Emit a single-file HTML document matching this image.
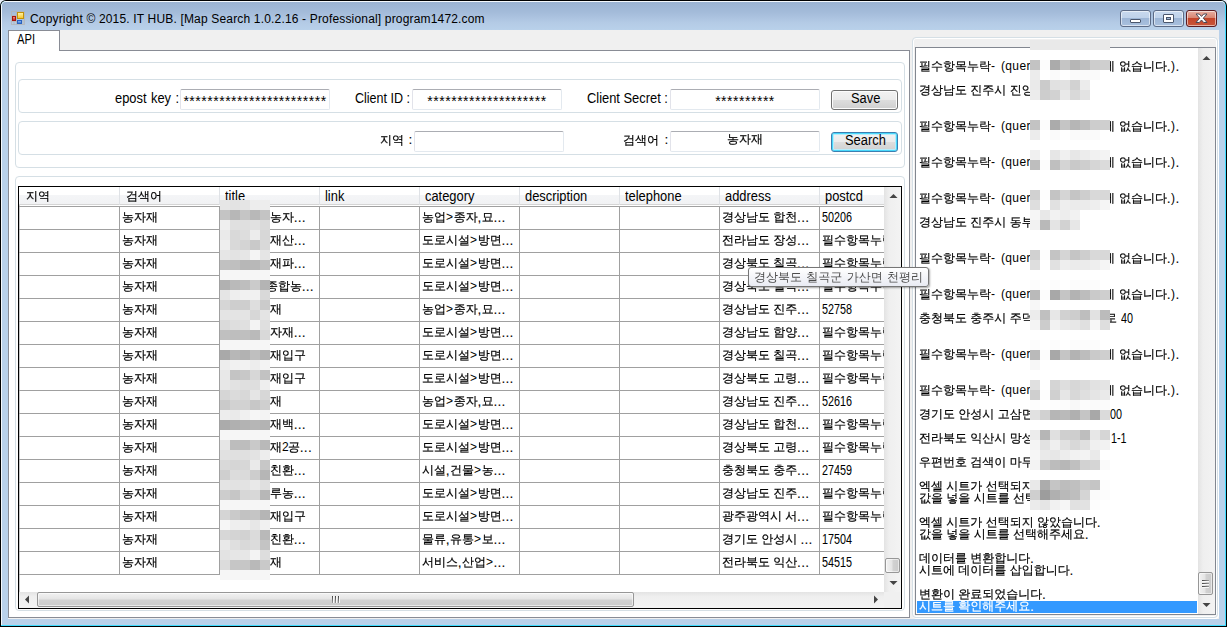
<!DOCTYPE html><html lang="ko"><head><meta charset="utf-8"><title>Map Search</title><style>
*{box-sizing:border-box;margin:0;padding:0}
html,body{width:1227px;height:627px;overflow:hidden;background:#b9d1ea}
body{position:relative;font-family:'Liberation Sans','WenQuanYi Zen Hei',sans-serif;font-size:12px;line-height:12px;color:#000;-webkit-text-stroke:.2px #000}
#win,#win *{position:absolute}
#win{left:0;top:0;width:1227px;height:627px;background:#b9d1ea;overflow:hidden}
#title{left:2px;top:2px;width:1223px;height:28px;background:linear-gradient(#9bb3d2 0,#a3bbd9 35%,#b4cbe6 75%,#b9d1ea 100%);border-radius:4px 4px 0 0}
#ttext{left:30px;top:11px;font-size:12px;line-height:16px;letter-spacing:.17px;-webkit-text-stroke:0;white-space:nowrap;color:#000;font-family:'Liberation Sans','DejaVu Sans',sans-serif}
#client{left:8px;top:30px;width:1211px;height:589px;background:#f0f0f0}
.gb{border:1px solid #d5dfe5;border-radius:4px;box-shadow:inset 0 0 0 1px #fff,1px 1px 0 #fff}
.tb{background:#fff;border:1px solid #e3e9ef;border-top-color:#abadb3;border-left-color:#e2e3ea;border-radius:2px;height:21px;text-align:center;line-height:19px;white-space:nowrap;overflow:hidden}
.lbl{white-space:nowrap;line-height:12px;word-spacing:1.5px}
.btn{border:1px solid #707070;border-radius:3px;box-shadow:inset 0 0 0 1px #fcfcfc;background:linear-gradient(#f2f2f2 0,#ebebeb 48%,#dddddd 52%,#cfcfcf 100%);text-align:center;line-height:18px}
.cell{white-space:nowrap;overflow:hidden;line-height:12px;height:13px}
.hd{white-space:nowrap;line-height:12px}
.ln{white-space:nowrap;line-height:12px;height:12px;left:919px}
.m{width:10px;height:10px}
.L{-webkit-text-stroke:0;font-size:14px;line-height:14px;white-space:nowrap;word-spacing:1px;transform:scaleX(.92);transform-origin:0 0}
.D{-webkit-text-stroke:0;font-size:14px;line-height:14px;white-space:nowrap;transform:scaleX(.771);transform-origin:0 0}
.dg{position:static !important;letter-spacing:-.6px;-webkit-text-stroke:0}
.q{position:relative !important;top:1px;letter-spacing:.7px}
.p{position:static !important;letter-spacing:.7px;-webkit-text-stroke:0}
.st{position:static !important;display:inline-block;font-size:14px;line-height:19px;letter-spacing:.52px;-webkit-text-stroke:0;transform:translateY(1.5px)}
</style></head><body><div id="win">
<div style="left:0;top:0;width:1227px;height:627px;background:#e8f0fa"></div>
<div style="left:0;top:0;width:1227px;height:627px;background:#000;border-radius:6px 6px 0 0"></div>
<div style="left:1px;top:1px;width:1225px;height:625px;background:#3fdcff;border-radius:5px 5px 0 0"></div>
<div style="left:1px;top:1px;width:1224px;height:624px;background:#f4f8fc;border-radius:5px 4px 0 0"></div>
<div style="left:2px;top:2px;width:1223px;height:623px;background:#b9d1ea;border-radius:4px 4px 0 0"></div>
<div id="title"></div>
<div id="ttext">Copyright © 2015. IT HUB. [Map Search 1.0.2.16 - Professional] program1472.com</div>
<svg style="left:11px;top:11px" width="14" height="14" viewBox="0 0 14 14"><g fill="none" stroke="#b4b4b4" stroke-opacity=".75"><rect x=".5" y=".5" width="13" height="13"/><path d="M5.5 .5V13.5M.5 4.5H5.5M.5 10.5H5.5M3 10.5V13.5M12 8.5V13.5"/></g><defs><linearGradient id="gy" x1="0" y1="0" x2="0" y2="1"><stop offset="0" stop-color="#fff6b0"/><stop offset="1" stop-color="#f7c322"/></linearGradient><linearGradient id="gr" x1="0" y1="0" x2="0" y2="1"><stop offset="0" stop-color="#f4a090"/><stop offset="1" stop-color="#c01810"/></linearGradient><linearGradient id="gbl" x1="0" y1="0" x2="0" y2="1"><stop offset="0" stop-color="#9cc4f8"/><stop offset="1" stop-color="#2f6fd0"/></linearGradient></defs><rect x="6.5" y="1.5" width="6" height="6" fill="url(#gy)" stroke="#c39208"/><rect x="1.5" y="5.5" width="3" height="4" fill="url(#gr)" stroke="#a8140c"/><rect x="6.5" y="9.5" width="4" height="3" fill="url(#gbl)" stroke="#2a62c0"/></svg>
<div style="left:1120px;top:10px;width:31px;height:17px;border:1px solid #5c6b86;border-radius:3px;background:linear-gradient(#c8d9ee 0,#bfd2ea 45%,#9db6d6 50%,#a9c0de 100%);box-shadow:inset 0 0 0 1px rgba(255,255,255,.55)"></div>
<div style="left:1153px;top:10px;width:31px;height:17px;border:1px solid #5c6b86;border-radius:3px;background:linear-gradient(#c8d9ee 0,#bfd2ea 45%,#9db6d6 50%,#a9c0de 100%);box-shadow:inset 0 0 0 1px rgba(255,255,255,.55)"></div>
<div style="left:1186px;top:10px;width:31px;height:17px;border:1px solid #5b1c22;border-radius:3px;background:linear-gradient(#e8b0a3 0,#d98673 45%,#c4452b 50%,#c8563a 100%);box-shadow:inset 0 0 0 1px rgba(255,255,255,.55)"></div>
<div style="left:1130px;top:19px;width:11px;height:4px;background:#fff;border:1px solid #4a566c;border-radius:1px"></div>
<div style="left:1163px;top:14px;width:11px;height:9px;background:#fff;border:1px solid #4a566c;border-radius:1px"></div>
<div style="left:1166px;top:17px;width:5px;height:3px;background:#9fb7d6;border:1px solid #4a566c"></div>
<svg style="left:1195px;top:13px" width="13" height="11" viewBox="0 0 13 11"><path d="M1 1 H4.3 L6.5 3.4 L8.7 1 H12 L8.3 5.2 L12 9.5 H8.7 L6.5 7 L4.3 9.5 H1 L4.7 5.2 Z" fill="#fff" stroke="#4a4a58" stroke-width="1" stroke-linejoin="round"/></svg>
<div id="client"></div>
<div style="left:8px;top:50px;width:902px;height:568px;background:#fff;border:1px solid #898c95"></div>
<div style="left:8px;top:30px;width:52px;height:21px;background:#fff;border:1px solid #898c95;border-bottom:none"></div>
<div class="L" style="left:17px;top:32px;transform:scaleX(.8)">API</div>
<div class="gb" style="left:15px;top:62px;width:890px;height:106px"></div>
<div class="gb" style="left:18px;top:79px;width:884px;height:34px"></div>
<div class="gb" style="left:18px;top:121px;width:884px;height:34px"></div>
<div class="gb" style="left:15px;top:176px;width:890px;height:435px"></div>
<div class="L" style="left:115px;top:91px">epost key :</div>
<div class="tb" style="left:180px;top:89px;width:150px"><span class="st">************************</span></div>
<div class="L" style="left:355px;top:91px;word-spacing:0;transform:scaleX(.895)">Client ID :</div>
<div class="tb" style="left:412px;top:89px;width:150px"><span class="st">********************</span></div>
<div class="L" style="left:587px;top:91px;word-spacing:0">Client Secret :</div>
<div class="tb" style="left:670px;top:89px;width:150px"><span class="st">**********</span></div>
<div class="btn" style="left:831px;top:90px;width:67px;height:20px"></div>
<div class="L" style="left:851px;top:91px">Save</div>
<div class="lbl" style="left:380px;top:134px">지역 :</div>
<div class="tb" style="left:414px;top:131px;width:150px"></div>
<div class="lbl" style="left:623px;top:134px;word-spacing:2.5px">검색어 :</div>
<div class="tb" style="left:670px;top:131px;width:150px;line-height:15px">농자재</div>
<div class="btn" style="left:831px;top:132px;width:67px;height:20px;border-color:#3c7fb1;box-shadow:inset 0 0 0 1px #48d8fb,inset 0 0 0 2px #b8ecfb"></div>
<div class="L" style="left:845px;top:133px">Search</div>
<div style="left:18px;top:186px;width:884px;height:423px;background:#fff;border:1px solid #000;box-shadow:inset 1px 1px 0 rgba(0,0,0,.22)"></div>
<div style="left:19px;top:187px;width:865px;height:18px;background:linear-gradient(#fff 0,#fff 45%,#f4f5f7 50%,#f1f2f4 100%);border-bottom:1px solid #d5d5d5"></div>
<div class="hd" style="left:26px;top:190px">지역</div>
<div class="hd" style="left:126px;top:190px">검색어</div>
<div style="left:119px;top:187px;width:1px;height:18px;background:#dfe2e6"></div>
<div class="L" style="left:225px;top:189px">title</div>
<div style="left:219px;top:187px;width:1px;height:18px;background:#dfe2e6"></div>
<div class="L" style="left:325px;top:189px">link</div>
<div style="left:319px;top:187px;width:1px;height:18px;background:#dfe2e6"></div>
<div class="L" style="left:425px;top:189px">category</div>
<div style="left:419px;top:187px;width:1px;height:18px;background:#dfe2e6"></div>
<div class="L" style="left:525px;top:189px">description</div>
<div style="left:519px;top:187px;width:1px;height:18px;background:#dfe2e6"></div>
<div class="L" style="left:625px;top:189px">telephone</div>
<div style="left:619px;top:187px;width:1px;height:18px;background:#dfe2e6"></div>
<div class="L" style="left:725px;top:189px">address</div>
<div style="left:719px;top:187px;width:1px;height:18px;background:#dfe2e6"></div>
<div class="L" style="left:825px;top:189px">postcd</div>
<div style="left:819px;top:187px;width:1px;height:18px;background:#dfe2e6"></div>
<div style="left:19px;top:206px;width:865px;height:1px;background:#a0a0a0"></div>
<div style="left:19px;top:229px;width:865px;height:1px;background:#a0a0a0"></div>
<div style="left:19px;top:252px;width:865px;height:1px;background:#a0a0a0"></div>
<div style="left:19px;top:275px;width:865px;height:1px;background:#a0a0a0"></div>
<div style="left:19px;top:298px;width:865px;height:1px;background:#a0a0a0"></div>
<div style="left:19px;top:321px;width:865px;height:1px;background:#a0a0a0"></div>
<div style="left:19px;top:344px;width:865px;height:1px;background:#a0a0a0"></div>
<div style="left:19px;top:367px;width:865px;height:1px;background:#a0a0a0"></div>
<div style="left:19px;top:390px;width:865px;height:1px;background:#a0a0a0"></div>
<div style="left:19px;top:413px;width:865px;height:1px;background:#a0a0a0"></div>
<div style="left:19px;top:436px;width:865px;height:1px;background:#a0a0a0"></div>
<div style="left:19px;top:459px;width:865px;height:1px;background:#a0a0a0"></div>
<div style="left:19px;top:482px;width:865px;height:1px;background:#a0a0a0"></div>
<div style="left:19px;top:505px;width:865px;height:1px;background:#a0a0a0"></div>
<div style="left:19px;top:528px;width:865px;height:1px;background:#a0a0a0"></div>
<div style="left:19px;top:551px;width:865px;height:1px;background:#a0a0a0"></div>
<div style="left:19px;top:574px;width:865px;height:1px;background:#a0a0a0"></div>
<div style="left:119px;top:206px;width:1px;height:369px;background:#a0a0a0"></div>
<div style="left:219px;top:206px;width:1px;height:369px;background:#a0a0a0"></div>
<div style="left:319px;top:206px;width:1px;height:369px;background:#a0a0a0"></div>
<div style="left:419px;top:206px;width:1px;height:369px;background:#a0a0a0"></div>
<div style="left:519px;top:206px;width:1px;height:369px;background:#a0a0a0"></div>
<div style="left:619px;top:206px;width:1px;height:369px;background:#a0a0a0"></div>
<div style="left:719px;top:206px;width:1px;height:369px;background:#a0a0a0"></div>
<div style="left:819px;top:206px;width:1px;height:369px;background:#a0a0a0"></div>
<div class="cell" style="left:122px;top:211px">농자재</div>
<div class="cell" style="left:270px;top:211px">농자<span class="q">...</span></div>
<div class="cell" style="left:422px;top:211px">농업<span class="p">&gt;</span>종자<span class="q">,</span>묘<span class="q">...</span></div>
<div class="cell" style="left:722px;top:211px">경상남도 합천<span class="q">...</span></div>
<div class="D" style="left:822px;top:210px">50206</div>
<div class="cell" style="left:122px;top:234px">농자재</div>
<div class="cell" style="left:270px;top:234px">재산<span class="q">...</span></div>
<div class="cell" style="left:422px;top:234px">도로시설<span class="p">&gt;</span>방면<span class="q">...</span></div>
<div class="cell" style="left:722px;top:234px">전라남도 장성<span class="q">...</span></div>
<div class="cell" style="left:822px;top:234px;width:63px">필수항목누락</div>
<div class="cell" style="left:122px;top:257px">농자재</div>
<div class="cell" style="left:270px;top:257px">재파<span class="q">...</span></div>
<div class="cell" style="left:422px;top:257px">도로시설<span class="p">&gt;</span>방면<span class="q">...</span></div>
<div class="cell" style="left:722px;top:257px">경상북도 칠곡<span class="q">...</span></div>
<div class="cell" style="left:822px;top:257px;width:63px">필수항목누락</div>
<div class="cell" style="left:122px;top:280px">농자재</div>
<div class="cell" style="left:266px;top:280px">종합농<span class="q">...</span></div>
<div class="cell" style="left:422px;top:280px">도로시설<span class="p">&gt;</span>방면<span class="q">...</span></div>
<div class="cell" style="left:722px;top:280px">경상북도 칠곡<span class="q">...</span></div>
<div class="cell" style="left:822px;top:280px;width:63px">필수항목누락</div>
<div class="cell" style="left:122px;top:303px">농자재</div>
<div class="cell" style="left:270px;top:303px">재</div>
<div class="cell" style="left:422px;top:303px">농업<span class="p">&gt;</span>종자<span class="q">,</span>묘<span class="q">...</span></div>
<div class="cell" style="left:722px;top:303px">경상남도 진주<span class="q">...</span></div>
<div class="D" style="left:822px;top:302px">52758</div>
<div class="cell" style="left:122px;top:326px">농자재</div>
<div class="cell" style="left:270px;top:326px">자재<span class="q">...</span></div>
<div class="cell" style="left:422px;top:326px">도로시설<span class="p">&gt;</span>방면<span class="q">...</span></div>
<div class="cell" style="left:722px;top:326px">경상남도 함양<span class="q">...</span></div>
<div class="cell" style="left:822px;top:326px;width:63px">필수항목누락</div>
<div class="cell" style="left:122px;top:349px">농자재</div>
<div class="cell" style="left:270px;top:349px">재입구</div>
<div class="cell" style="left:422px;top:349px">도로시설<span class="p">&gt;</span>방면<span class="q">...</span></div>
<div class="cell" style="left:722px;top:349px">경상북도 칠곡<span class="q">...</span></div>
<div class="cell" style="left:822px;top:349px;width:63px">필수항목누락</div>
<div class="cell" style="left:122px;top:372px">농자재</div>
<div class="cell" style="left:270px;top:372px">재입구</div>
<div class="cell" style="left:422px;top:372px">도로시설<span class="p">&gt;</span>방면<span class="q">...</span></div>
<div class="cell" style="left:722px;top:372px">경상북도 고령<span class="q">...</span></div>
<div class="cell" style="left:822px;top:372px;width:63px">필수항목누락</div>
<div class="cell" style="left:122px;top:395px">농자재</div>
<div class="cell" style="left:270px;top:395px">재</div>
<div class="cell" style="left:422px;top:395px">농업<span class="p">&gt;</span>종자<span class="q">,</span>묘<span class="q">...</span></div>
<div class="cell" style="left:722px;top:395px">경상남도 진주<span class="q">...</span></div>
<div class="D" style="left:822px;top:394px">52616</div>
<div class="cell" style="left:122px;top:418px">농자재</div>
<div class="cell" style="left:270px;top:418px">재백<span class="q">...</span></div>
<div class="cell" style="left:422px;top:418px">도로시설<span class="p">&gt;</span>방면<span class="q">...</span></div>
<div class="cell" style="left:722px;top:418px">경상남도 합천<span class="q">...</span></div>
<div class="cell" style="left:822px;top:418px;width:63px">필수항목누락</div>
<div class="cell" style="left:122px;top:441px">농자재</div>
<div class="cell" style="left:270px;top:441px">재<span class="dg">2</span>공<span class="q">...</span></div>
<div class="cell" style="left:422px;top:441px">도로시설<span class="p">&gt;</span>방면<span class="q">...</span></div>
<div class="cell" style="left:722px;top:441px">경상북도 고령<span class="q">...</span></div>
<div class="cell" style="left:822px;top:441px;width:63px">필수항목누락</div>
<div class="cell" style="left:122px;top:464px">농자재</div>
<div class="cell" style="left:270px;top:464px">친환<span class="q">...</span></div>
<div class="cell" style="left:422px;top:464px">시설<span class="q">,</span>건물<span class="p">&gt;</span>농<span class="q">...</span></div>
<div class="cell" style="left:722px;top:464px">충청북도 충주<span class="q">...</span></div>
<div class="D" style="left:822px;top:463px">27459</div>
<div class="cell" style="left:122px;top:487px">농자재</div>
<div class="cell" style="left:270px;top:487px">루농<span class="q">...</span></div>
<div class="cell" style="left:422px;top:487px">도로시설<span class="p">&gt;</span>방면<span class="q">...</span></div>
<div class="cell" style="left:722px;top:487px">경상남도 진주<span class="q">...</span></div>
<div class="cell" style="left:822px;top:487px;width:63px">필수항목누락</div>
<div class="cell" style="left:122px;top:510px">농자재</div>
<div class="cell" style="left:270px;top:510px">재입구</div>
<div class="cell" style="left:422px;top:510px">도로시설<span class="p">&gt;</span>방면<span class="q">...</span></div>
<div class="cell" style="left:722px;top:510px">광주광역시 서<span class="q">...</span></div>
<div class="cell" style="left:822px;top:510px;width:63px">필수항목누락</div>
<div class="cell" style="left:122px;top:533px">농자재</div>
<div class="cell" style="left:270px;top:533px">친환<span class="q">...</span></div>
<div class="cell" style="left:422px;top:533px">물류<span class="q">,</span>유통<span class="p">&gt;</span>보<span class="q">...</span></div>
<div class="cell" style="left:722px;top:533px">경기도 안성시 <span class="q">...</span></div>
<div class="D" style="left:822px;top:532px">17504</div>
<div class="cell" style="left:122px;top:556px">농자재</div>
<div class="cell" style="left:270px;top:556px">재</div>
<div class="cell" style="left:422px;top:556px">서비스<span class="q">,</span>산업<span class="p">&gt;</span><span class="q">...</span></div>
<div class="cell" style="left:722px;top:556px">전라북도 익산<span class="q">...</span></div>
<div class="D" style="left:822px;top:555px">54515</div>
<div class="m" style="left:220px;top:200px;background:#e6e6e6"></div>
<div class="m" style="left:230px;top:200px;background:#e3e3e3"></div>
<div class="m" style="left:240px;top:200px;background:#e5e5e5"></div>
<div class="m" style="left:250px;top:200px;background:#ededed"></div>
<div class="m" style="left:260px;top:200px;background:#ededed"></div>
<div class="m" style="left:220px;top:210px;background:#c4c4c4"></div>
<div class="m" style="left:230px;top:210px;background:#b7b7b7"></div>
<div class="m" style="left:240px;top:210px;background:#c5c5c5"></div>
<div class="m" style="left:250px;top:210px;background:#b8b8b8"></div>
<div class="m" style="left:260px;top:210px;background:#c4c4c4"></div>
<div class="m" style="left:220px;top:220px;background:#efefef"></div>
<div class="m" style="left:230px;top:220px;background:#e0e0e0"></div>
<div class="m" style="left:240px;top:220px;background:#dfdfdf"></div>
<div class="m" style="left:250px;top:220px;background:#e1e1e1"></div>
<div class="m" style="left:260px;top:220px;background:#dadada"></div>
<div class="m" style="left:220px;top:230px;background:#eaeaea"></div>
<div class="m" style="left:230px;top:230px;background:#d9d9d9"></div>
<div class="m" style="left:240px;top:230px;background:#dddddd"></div>
<div class="m" style="left:250px;top:230px;background:#ececec"></div>
<div class="m" style="left:260px;top:230px;background:#d7d7d7"></div>
<div class="m" style="left:220px;top:240px;background:#eeeeee"></div>
<div class="m" style="left:230px;top:240px;background:#d9d9d9"></div>
<div class="m" style="left:240px;top:240px;background:#d4d4d4"></div>
<div class="m" style="left:250px;top:240px;background:#c9c9c9"></div>
<div class="m" style="left:260px;top:240px;background:#d9d9d9"></div>
<div class="m" style="left:220px;top:250px;background:#e6e6e6"></div>
<div class="m" style="left:230px;top:250px;background:#e3e3e3"></div>
<div class="m" style="left:240px;top:250px;background:#e6e6e6"></div>
<div class="m" style="left:250px;top:250px;background:#f4f4f4"></div>
<div class="m" style="left:260px;top:250px;background:#e5e5e5"></div>
<div class="m" style="left:220px;top:260px;background:#c1c1c1"></div>
<div class="m" style="left:230px;top:260px;background:#bfbfbf"></div>
<div class="m" style="left:240px;top:260px;background:#b7b7b7"></div>
<div class="m" style="left:250px;top:260px;background:#b8b8b8"></div>
<div class="m" style="left:260px;top:260px;background:#c1c1c1"></div>
<div class="m" style="left:220px;top:270px;background:#f6f6f6"></div>
<div class="m" style="left:230px;top:270px;background:#f6f6f6"></div>
<div class="m" style="left:240px;top:270px;background:#f6f6f6"></div>
<div class="m" style="left:250px;top:270px;background:#f6f6f6"></div>
<div class="m" style="left:260px;top:270px;background:#f6f6f6"></div>
<div class="m" style="left:220px;top:280px;background:#b1b1b1"></div>
<div class="m" style="left:230px;top:280px;background:#bababa"></div>
<div class="m" style="left:240px;top:280px;background:#bebebe"></div>
<div class="m" style="left:250px;top:280px;background:#cbcbcb"></div>
<div class="m" style="left:260px;top:280px;background:#b4b4b4"></div>
<div class="m" style="left:220px;top:290px;background:#e5e5e5"></div>
<div class="m" style="left:230px;top:290px;background:#eeeeee"></div>
<div class="m" style="left:240px;top:290px;background:#f1f1f1"></div>
<div class="m" style="left:250px;top:290px;background:#f1f1f1"></div>
<div class="m" style="left:260px;top:290px;background:#d9d9d9"></div>
<div class="m" style="left:220px;top:300px;background:#d6d6d6"></div>
<div class="m" style="left:230px;top:300px;background:#cecece"></div>
<div class="m" style="left:240px;top:300px;background:#cecece"></div>
<div class="m" style="left:250px;top:300px;background:#dedede"></div>
<div class="m" style="left:260px;top:300px;background:#cbcbcb"></div>
<div class="m" style="left:220px;top:310px;background:#e4e4e4"></div>
<div class="m" style="left:230px;top:310px;background:#e4e4e4"></div>
<div class="m" style="left:240px;top:310px;background:#e4e4e4"></div>
<div class="m" style="left:250px;top:310px;background:#d7d7d7"></div>
<div class="m" style="left:260px;top:310px;background:#e4e4e4"></div>
<div class="m" style="left:220px;top:320px;background:#dadada"></div>
<div class="m" style="left:230px;top:320px;background:#dedede"></div>
<div class="m" style="left:240px;top:320px;background:#e0e0e0"></div>
<div class="m" style="left:250px;top:320px;background:#f3f3f3"></div>
<div class="m" style="left:260px;top:320px;background:#dfdfdf"></div>
<div class="m" style="left:220px;top:330px;background:#c0c0c0"></div>
<div class="m" style="left:230px;top:330px;background:#bebebe"></div>
<div class="m" style="left:240px;top:330px;background:#bfbfbf"></div>
<div class="m" style="left:250px;top:330px;background:#bababa"></div>
<div class="m" style="left:260px;top:330px;background:#d9d9d9"></div>
<div class="m" style="left:220px;top:340px;background:#f6f6f6"></div>
<div class="m" style="left:230px;top:340px;background:#f6f6f6"></div>
<div class="m" style="left:240px;top:340px;background:#f6f6f6"></div>
<div class="m" style="left:250px;top:340px;background:#f6f6f6"></div>
<div class="m" style="left:260px;top:340px;background:#f6f6f6"></div>
<div class="m" style="left:220px;top:350px;background:#a9a9a9"></div>
<div class="m" style="left:230px;top:350px;background:#b7b7b7"></div>
<div class="m" style="left:240px;top:350px;background:#b2b2b2"></div>
<div class="m" style="left:250px;top:350px;background:#bfbfbf"></div>
<div class="m" style="left:260px;top:350px;background:#b3b3b3"></div>
<div class="m" style="left:220px;top:360px;background:#ededed"></div>
<div class="m" style="left:230px;top:360px;background:#f1f1f1"></div>
<div class="m" style="left:240px;top:360px;background:#f2f2f2"></div>
<div class="m" style="left:250px;top:360px;background:#ededed"></div>
<div class="m" style="left:260px;top:360px;background:#f3f3f3"></div>
<div class="m" style="left:220px;top:370px;background:#e8e8e8"></div>
<div class="m" style="left:230px;top:370px;background:#c4c4c4"></div>
<div class="m" style="left:240px;top:370px;background:#c8c8c8"></div>
<div class="m" style="left:250px;top:370px;background:#d7d7d7"></div>
<div class="m" style="left:260px;top:370px;background:#c2c2c2"></div>
<div class="m" style="left:220px;top:380px;background:#e7e7e7"></div>
<div class="m" style="left:230px;top:380px;background:#e2e2e2"></div>
<div class="m" style="left:240px;top:380px;background:#dfdfdf"></div>
<div class="m" style="left:250px;top:380px;background:#dedede"></div>
<div class="m" style="left:260px;top:380px;background:#eeeeee"></div>
<div class="m" style="left:220px;top:390px;background:#d6d6d6"></div>
<div class="m" style="left:230px;top:390px;background:#dbdbdb"></div>
<div class="m" style="left:240px;top:390px;background:#d8d8d8"></div>
<div class="m" style="left:250px;top:390px;background:#e5e5e5"></div>
<div class="m" style="left:260px;top:390px;background:#d7d7d7"></div>
<div class="m" style="left:220px;top:400px;background:#cacaca"></div>
<div class="m" style="left:230px;top:400px;background:#d2d2d2"></div>
<div class="m" style="left:240px;top:400px;background:#d2d2d2"></div>
<div class="m" style="left:250px;top:400px;background:#c7c7c7"></div>
<div class="m" style="left:260px;top:400px;background:#cfcfcf"></div>
<div class="m" style="left:220px;top:410px;background:#ededed"></div>
<div class="m" style="left:230px;top:410px;background:#eaeaea"></div>
<div class="m" style="left:240px;top:410px;background:#f0f0f0"></div>
<div class="m" style="left:250px;top:410px;background:#f6f6f6"></div>
<div class="m" style="left:260px;top:410px;background:#f3f3f3"></div>
<div class="m" style="left:220px;top:420px;background:#ababab"></div>
<div class="m" style="left:230px;top:420px;background:#b0b0b0"></div>
<div class="m" style="left:240px;top:420px;background:#b3b3b3"></div>
<div class="m" style="left:250px;top:420px;background:#b6b6b6"></div>
<div class="m" style="left:260px;top:420px;background:#b3b3b3"></div>
<div class="m" style="left:220px;top:430px;background:#f6f6f6"></div>
<div class="m" style="left:230px;top:430px;background:#f6f6f6"></div>
<div class="m" style="left:240px;top:430px;background:#f6f6f6"></div>
<div class="m" style="left:250px;top:430px;background:#f6f6f6"></div>
<div class="m" style="left:260px;top:430px;background:#f6f6f6"></div>
<div class="m" style="left:220px;top:440px;background:#e6e6e6"></div>
<div class="m" style="left:230px;top:440px;background:#bdbdbd"></div>
<div class="m" style="left:240px;top:440px;background:#bdbdbd"></div>
<div class="m" style="left:250px;top:440px;background:#c9c9c9"></div>
<div class="m" style="left:260px;top:440px;background:#b9b9b9"></div>
<div class="m" style="left:220px;top:450px;background:#e1e1e1"></div>
<div class="m" style="left:230px;top:450px;background:#e0e0e0"></div>
<div class="m" style="left:240px;top:450px;background:#e0e0e0"></div>
<div class="m" style="left:250px;top:450px;background:#e3e3e3"></div>
<div class="m" style="left:260px;top:450px;background:#ededed"></div>
<div class="m" style="left:220px;top:460px;background:#d9d9d9"></div>
<div class="m" style="left:230px;top:460px;background:#d6d6d6"></div>
<div class="m" style="left:240px;top:460px;background:#d7d7d7"></div>
<div class="m" style="left:250px;top:460px;background:#eaeaea"></div>
<div class="m" style="left:260px;top:460px;background:#c7c7c7"></div>
<div class="m" style="left:220px;top:470px;background:#cfcfcf"></div>
<div class="m" style="left:230px;top:470px;background:#dcdcdc"></div>
<div class="m" style="left:240px;top:470px;background:#dadada"></div>
<div class="m" style="left:250px;top:470px;background:#cdcdcd"></div>
<div class="m" style="left:260px;top:470px;background:#b6b6b6"></div>
<div class="m" style="left:220px;top:480px;background:#e4e4e4"></div>
<div class="m" style="left:230px;top:480px;background:#e2e2e2"></div>
<div class="m" style="left:240px;top:480px;background:#e3e3e3"></div>
<div class="m" style="left:250px;top:480px;background:#e9e9e9"></div>
<div class="m" style="left:260px;top:480px;background:#dfdfdf"></div>
<div class="m" style="left:220px;top:490px;background:#cdcdcd"></div>
<div class="m" style="left:230px;top:490px;background:#c6c6c6"></div>
<div class="m" style="left:240px;top:490px;background:#d7d7d7"></div>
<div class="m" style="left:250px;top:490px;background:#d8d8d8"></div>
<div class="m" style="left:260px;top:490px;background:#b7b7b7"></div>
<div class="m" style="left:220px;top:500px;background:#f6f6f6"></div>
<div class="m" style="left:230px;top:500px;background:#f6f6f6"></div>
<div class="m" style="left:240px;top:500px;background:#f6f6f6"></div>
<div class="m" style="left:250px;top:500px;background:#f6f6f6"></div>
<div class="m" style="left:260px;top:500px;background:#f6f6f6"></div>
<div class="m" style="left:220px;top:510px;background:#d5d5d5"></div>
<div class="m" style="left:230px;top:510px;background:#cacaca"></div>
<div class="m" style="left:240px;top:510px;background:#c2c2c2"></div>
<div class="m" style="left:250px;top:510px;background:#c5c5c5"></div>
<div class="m" style="left:260px;top:510px;background:#b5b5b5"></div>
<div class="m" style="left:220px;top:520px;background:#f6f6f6"></div>
<div class="m" style="left:230px;top:520px;background:#eeeeee"></div>
<div class="m" style="left:240px;top:520px;background:#eeeeee"></div>
<div class="m" style="left:250px;top:520px;background:#e7e7e7"></div>
<div class="m" style="left:260px;top:520px;background:#f1f1f1"></div>
<div class="m" style="left:220px;top:530px;background:#d7d7d7"></div>
<div class="m" style="left:230px;top:530px;background:#d4d4d4"></div>
<div class="m" style="left:240px;top:530px;background:#d2d2d2"></div>
<div class="m" style="left:250px;top:530px;background:#dbdbdb"></div>
<div class="m" style="left:260px;top:530px;background:#b9b9b9"></div>
<div class="m" style="left:220px;top:540px;background:#e9e9e9"></div>
<div class="m" style="left:230px;top:540px;background:#dfdfdf"></div>
<div class="m" style="left:240px;top:540px;background:#d9d9d9"></div>
<div class="m" style="left:250px;top:540px;background:#dcdcdc"></div>
<div class="m" style="left:260px;top:540px;background:#c4c4c4"></div>
<div class="m" style="left:220px;top:550px;background:#e3e3e3"></div>
<div class="m" style="left:230px;top:550px;background:#e6e6e6"></div>
<div class="m" style="left:240px;top:550px;background:#e7e7e7"></div>
<div class="m" style="left:250px;top:550px;background:#f3f3f3"></div>
<div class="m" style="left:260px;top:550px;background:#dddddd"></div>
<div class="m" style="left:220px;top:560px;background:#dcdcdc"></div>
<div class="m" style="left:230px;top:560px;background:#c6c6c6"></div>
<div class="m" style="left:240px;top:560px;background:#c6c6c6"></div>
<div class="m" style="left:250px;top:560px;background:#b9b9b9"></div>
<div class="m" style="left:260px;top:560px;background:#c9c9c9"></div>
<div class="m" style="left:220px;top:570px;background:#f6f6f6"></div>
<div class="m" style="left:230px;top:570px;background:#f6f6f6"></div>
<div class="m" style="left:240px;top:570px;background:#f6f6f6"></div>
<div class="m" style="left:250px;top:570px;background:#f6f6f6"></div>
<div class="m" style="left:260px;top:570px;background:#f6f6f6"></div>
<div style="left:884px;top:187px;width:17px;height:405px;background:linear-gradient(90deg,#e3e3e3 0,#efefef 30%,#f3f3f3 100%)"></div>
<svg style="left:889px;top:193px" width="9" height="6" viewBox="0 0 9 6"><path d="M0.5 5 L4.5 1 L8.5 5 Z" fill="#444"/></svg>
<div style="left:885px;top:558px;width:15px;height:15px;border:1px solid #979797;border-radius:2px;background:linear-gradient(90deg,#f2f2f2 0,#e4e4e4 48%,#d2d2d2 52%,#cbcbcb 100%);box-shadow:inset 0 0 0 1px rgba(255,255,255,.55)"></div>
<svg style="left:889px;top:580px" width="9" height="6" viewBox="0 0 9 6"><path d="M0.5 1 L8.5 1 L4.5 5 Z" fill="#444"/></svg>
<div style="left:19px;top:592px;width:865px;height:16px;background:linear-gradient(#e3e3e3 0,#efefef 30%,#f3f3f3 100%)"></div>
<div style="left:884px;top:592px;width:17px;height:16px;background:#f0f0f0"></div>
<svg style="left:24px;top:595px" width="6" height="9" viewBox="0 0 6 9"><path d="M5 0.5 L1 4.5 L5 8.5 Z" fill="#444"/></svg>
<svg style="left:873px;top:595px" width="6" height="9" viewBox="0 0 6 9"><path d="M1 0.5 L5 4.5 L1 8.5 Z" fill="#444"/></svg>
<div style="left:37px;top:592px;width:597px;height:15px;border:1px solid #979797;border-radius:2px;background:linear-gradient(#f2f2f2 0,#e4e4e4 48%,#d2d2d2 52%,#cbcbcb 100%);box-shadow:inset 0 0 0 1px rgba(255,255,255,.55)"></div>
<div style="left:332px;top:596px;width:1px;height:7px;background:linear-gradient(#444,#999);box-shadow:1px 0 0 #f8f8f8"></div>
<div style="left:335px;top:596px;width:1px;height:7px;background:linear-gradient(#444,#999);box-shadow:1px 0 0 #f8f8f8"></div>
<div style="left:338px;top:596px;width:1px;height:7px;background:linear-gradient(#444,#999);box-shadow:1px 0 0 #f8f8f8"></div>
<div class="gb" style="left:912px;top:37px;width:306px;height:581px"></div>
<div style="left:915px;top:47px;width:301px;height:568px;background:#fff;border:1px solid #828790"></div>
<div style="left:1198px;top:48px;width:17px;height:566px;background:linear-gradient(90deg,#e3e3e3 0,#efefef 30%,#f3f3f3 100%)"></div>
<svg style="left:1202px;top:55px" width="9" height="6" viewBox="0 0 9 6"><path d="M0.5 5 L4.5 1 L8.5 5 Z" fill="#444"/></svg>
<svg style="left:1202px;top:602px" width="9" height="6" viewBox="0 0 9 6"><path d="M0.5 1 L8.5 1 L4.5 5 Z" fill="#444"/></svg>
<div style="left:1198px;top:572px;width:15px;height:23px;border:1px solid #979797;border-radius:2px;background:linear-gradient(90deg,#f2f2f2 0,#e4e4e4 48%,#d2d2d2 52%,#cbcbcb 100%);box-shadow:inset 0 0 0 1px rgba(255,255,255,.55)"></div>
<div style="left:1202px;top:580px;width:7px;height:1px;background:linear-gradient(90deg,#444,#999);box-shadow:0 1px 0 #f8f8f8"></div>
<div style="left:1202px;top:583px;width:7px;height:1px;background:linear-gradient(90deg,#444,#999);box-shadow:0 1px 0 #f8f8f8"></div>
<div style="left:1202px;top:586px;width:7px;height:1px;background:linear-gradient(90deg,#444,#999);box-shadow:0 1px 0 #f8f8f8"></div>
<div class="ln" style="top:60px">필수항목누락<span class="p">-</span></div>
<div class="ln" style="left:1001px;top:60px;letter-spacing:.35px;-webkit-text-stroke:0">(quer</div>
<div class="ln" style="left:1103px;top:60px">에</div>
<div class="ln" style="left:1119px;top:60px">없습니다<span class="q">.</span><span class="p">)</span><span class="q">.</span></div>
<div class="ln" style="top:84px">경상남도 진주시 진양</div>
<div class="ln" style="top:120px">필수항목누락<span class="p">-</span></div>
<div class="ln" style="left:1001px;top:120px;letter-spacing:.35px;-webkit-text-stroke:0">(quer</div>
<div class="ln" style="left:1103px;top:120px">에</div>
<div class="ln" style="left:1119px;top:120px">없습니다<span class="q">.</span><span class="p">)</span><span class="q">.</span></div>
<div class="ln" style="top:156px">필수항목누락<span class="p">-</span></div>
<div class="ln" style="left:1001px;top:156px;letter-spacing:.35px;-webkit-text-stroke:0">(quer</div>
<div class="ln" style="left:1103px;top:156px">에</div>
<div class="ln" style="left:1119px;top:156px">없습니다<span class="q">.</span><span class="p">)</span><span class="q">.</span></div>
<div class="ln" style="top:192px">필수항목누락<span class="p">-</span></div>
<div class="ln" style="left:1001px;top:192px;letter-spacing:.35px;-webkit-text-stroke:0">(quer</div>
<div class="ln" style="left:1103px;top:192px">에</div>
<div class="ln" style="left:1119px;top:192px">없습니다<span class="q">.</span><span class="p">)</span><span class="q">.</span></div>
<div class="ln" style="top:216px">경상남도 진주시 동부</div>
<div class="ln" style="top:252px">필수항목누락<span class="p">-</span></div>
<div class="ln" style="left:1001px;top:252px;letter-spacing:.35px;-webkit-text-stroke:0">(quer</div>
<div class="ln" style="left:1103px;top:252px">에</div>
<div class="ln" style="left:1119px;top:252px">없습니다<span class="q">.</span><span class="p">)</span><span class="q">.</span></div>
<div class="ln" style="top:288px">필수항목누락<span class="p">-</span></div>
<div class="ln" style="left:1001px;top:288px;letter-spacing:.35px;-webkit-text-stroke:0">(quer</div>
<div class="ln" style="left:1103px;top:288px">에</div>
<div class="ln" style="left:1119px;top:288px">없습니다<span class="q">.</span><span class="p">)</span><span class="q">.</span></div>
<div class="ln" style="top:312px">충청북도 충주시 주덕</div>
<div class="ln" style="left:1105px;top:312px">로</div>
<div class="D" style="left:1121px;top:311px">40</div>
<div class="ln" style="top:348px">필수항목누락<span class="p">-</span></div>
<div class="ln" style="left:1001px;top:348px;letter-spacing:.35px;-webkit-text-stroke:0">(quer</div>
<div class="ln" style="left:1103px;top:348px">에</div>
<div class="ln" style="left:1119px;top:348px">없습니다<span class="q">.</span><span class="p">)</span><span class="q">.</span></div>
<div class="ln" style="top:384px">필수항목누락<span class="p">-</span></div>
<div class="ln" style="left:1001px;top:384px;letter-spacing:.35px;-webkit-text-stroke:0">(quer</div>
<div class="ln" style="left:1103px;top:384px">에</div>
<div class="ln" style="left:1119px;top:384px">없습니다<span class="q">.</span><span class="p">)</span><span class="q">.</span></div>
<div class="ln" style="top:408px">경기도 안성시 고삼면</div>
<div class="D" style="left:1110px;top:407px">00</div>
<div class="ln" style="top:432px">전라북도 익산시 망성</div>
<div class="D" style="left:1111px;top:431px">1-1</div>
<div class="ln" style="top:456px">우편번호 검색이 마무</div>
<div class="ln" style="top:480px">엑셀 시트가 선택되지</div>
<div class="ln" style="top:492px">값을 넣을 시트를 선택</div>
<div class="ln" style="top:516px">엑셀 시트가 선택되지 않았습니다<span class="q">.</span></div>
<div class="ln" style="top:528px">값을 넣을 시트를 선택해주세요<span class="q">.</span></div>
<div class="ln" style="top:552px">데이터를 변환합니다<span class="q">.</span></div>
<div class="ln" style="top:564px">시트에 데이터를 삽입합니다<span class="q">.</span></div>
<div class="ln" style="top:588px">변환이 완료되었습니다<span class="q">.</span></div>
<div style="left:917px;top:601px;width:280px;height:12px;background:#3399ff"></div>
<div class="ln" style="top:600px;color:#fff;-webkit-text-stroke:.2px #fff">시트를 확인해주세요<span class="q">.</span></div>
<div class="m" style="left:1030px;top:40px;background:#e9e9e9"></div>
<div class="m" style="left:1040px;top:40px;background:#e9e9e9"></div>
<div class="m" style="left:1050px;top:40px;background:#e9e9e9"></div>
<div class="m" style="left:1060px;top:40px;background:#e9e9e9"></div>
<div class="m" style="left:1070px;top:40px;background:#e9e9e9"></div>
<div class="m" style="left:1080px;top:40px;background:#e9e9e9"></div>
<div class="m" style="left:1090px;top:40px;background:#e9e9e9"></div>
<div class="m" style="left:1100px;top:40px;background:#e9e9e9"></div>
<div class="m" style="left:1030px;top:60px;background:#c3c3c3"></div>
<div class="m" style="left:1040px;top:60px;background:#fcfcfc"></div>
<div class="m" style="left:1050px;top:60px;background:#ababab"></div>
<div class="m" style="left:1060px;top:60px;background:#c5c5c5"></div>
<div class="m" style="left:1070px;top:60px;background:#b6b6b6"></div>
<div class="m" style="left:1080px;top:60px;background:#bfbfbf"></div>
<div class="m" style="left:1090px;top:60px;background:#cdcdcd"></div>
<div class="m" style="left:1100px;top:60px;background:#cfcfcf"></div>
<div class="m" style="left:1030px;top:70px;background:#ececec"></div>
<div class="m" style="left:1050px;top:70px;background:#fafafa"></div>
<div class="m" style="left:1070px;top:70px;background:#fafafa"></div>
<div class="m" style="left:1080px;top:70px;background:#fafafa"></div>
<div class="m" style="left:1090px;top:70px;background:#fafafa"></div>
<div class="m" style="left:1030px;top:80px;background:#eaeaea"></div>
<div class="m" style="left:1040px;top:80px;background:#cbcbcb"></div>
<div class="m" style="left:1050px;top:80px;background:#e1e1e1"></div>
<div class="m" style="left:1060px;top:80px;background:#e2e2e2"></div>
<div class="m" style="left:1070px;top:80px;background:#d2d2d2"></div>
<div class="m" style="left:1080px;top:80px;background:#ececec"></div>
<div class="m" style="left:1030px;top:90px;background:#ececec"></div>
<div class="m" style="left:1040px;top:90px;background:#cdcdcd"></div>
<div class="m" style="left:1050px;top:90px;background:#d2d2d2"></div>
<div class="m" style="left:1060px;top:90px;background:#e9e9e9"></div>
<div class="m" style="left:1070px;top:90px;background:#d9d9d9"></div>
<div class="m" style="left:1080px;top:90px;background:#e3e3e3"></div>
<div class="m" style="left:1030px;top:120px;background:#c3c3c3"></div>
<div class="m" style="left:1040px;top:120px;background:#fcfcfc"></div>
<div class="m" style="left:1050px;top:120px;background:#ababab"></div>
<div class="m" style="left:1060px;top:120px;background:#c5c5c5"></div>
<div class="m" style="left:1070px;top:120px;background:#b6b6b6"></div>
<div class="m" style="left:1080px;top:120px;background:#bfbfbf"></div>
<div class="m" style="left:1090px;top:120px;background:#cdcdcd"></div>
<div class="m" style="left:1100px;top:120px;background:#cfcfcf"></div>
<div class="m" style="left:1030px;top:130px;background:#ececec"></div>
<div class="m" style="left:1050px;top:130px;background:#fafafa"></div>
<div class="m" style="left:1070px;top:130px;background:#fafafa"></div>
<div class="m" style="left:1080px;top:130px;background:#fafafa"></div>
<div class="m" style="left:1090px;top:130px;background:#fafafa"></div>
<div class="m" style="left:1030px;top:150px;background:#f0f0f0"></div>
<div class="m" style="left:1050px;top:150px;background:#e6e6e6"></div>
<div class="m" style="left:1060px;top:150px;background:#f0f0f0"></div>
<div class="m" style="left:1070px;top:150px;background:#e7e7e7"></div>
<div class="m" style="left:1080px;top:150px;background:#ececec"></div>
<div class="m" style="left:1090px;top:150px;background:#f1f1f1"></div>
<div class="m" style="left:1100px;top:150px;background:#f3f3f3"></div>
<div class="m" style="left:1030px;top:160px;background:#bebebe"></div>
<div class="m" style="left:1040px;top:160px;background:#fcfcfc"></div>
<div class="m" style="left:1050px;top:160px;background:#bfbfbf"></div>
<div class="m" style="left:1060px;top:160px;background:#d4d4d4"></div>
<div class="m" style="left:1070px;top:160px;background:#c9c9c9"></div>
<div class="m" style="left:1080px;top:160px;background:#cecece"></div>
<div class="m" style="left:1090px;top:160px;background:#d6d6d6"></div>
<div class="m" style="left:1100px;top:160px;background:#dbdbdb"></div>
<div class="m" style="left:1030px;top:190px;background:#d1d1d1"></div>
<div class="m" style="left:1040px;top:190px;background:#fdfdfd"></div>
<div class="m" style="left:1050px;top:190px;background:#c4c4c4"></div>
<div class="m" style="left:1060px;top:190px;background:#d5d5d5"></div>
<div class="m" style="left:1070px;top:190px;background:#c5c5c5"></div>
<div class="m" style="left:1080px;top:190px;background:#cecece"></div>
<div class="m" style="left:1090px;top:190px;background:#d9d9d9"></div>
<div class="m" style="left:1100px;top:190px;background:#d8d8d8"></div>
<div class="m" style="left:1030px;top:200px;background:#dedede"></div>
<div class="m" style="left:1050px;top:200px;background:#e1e1e1"></div>
<div class="m" style="left:1060px;top:200px;background:#eeeeee"></div>
<div class="m" style="left:1070px;top:200px;background:#ebebeb"></div>
<div class="m" style="left:1080px;top:200px;background:#ebebeb"></div>
<div class="m" style="left:1090px;top:200px;background:#eeeeee"></div>
<div class="m" style="left:1100px;top:200px;background:#f5f5f5"></div>
<div class="m" style="left:1030px;top:210px;background:#f6f6f6"></div>
<div class="m" style="left:1040px;top:210px;background:#e8e8e8"></div>
<div class="m" style="left:1050px;top:210px;background:#f2f2f2"></div>
<div class="m" style="left:1060px;top:210px;background:#ededed"></div>
<div class="m" style="left:1070px;top:210px;background:#f2f2f2"></div>
<div class="m" style="left:1030px;top:220px;background:#f2f2f2"></div>
<div class="m" style="left:1040px;top:220px;background:#b9b9b9"></div>
<div class="m" style="left:1050px;top:220px;background:#e4e4e4"></div>
<div class="m" style="left:1060px;top:220px;background:#d2d2d2"></div>
<div class="m" style="left:1070px;top:220px;background:#e7e7e7"></div>
<div class="m" style="left:1030px;top:250px;background:#d1d1d1"></div>
<div class="m" style="left:1040px;top:250px;background:#fdfdfd"></div>
<div class="m" style="left:1050px;top:250px;background:#c4c4c4"></div>
<div class="m" style="left:1060px;top:250px;background:#d5d5d5"></div>
<div class="m" style="left:1070px;top:250px;background:#c5c5c5"></div>
<div class="m" style="left:1080px;top:250px;background:#cecece"></div>
<div class="m" style="left:1090px;top:250px;background:#d9d9d9"></div>
<div class="m" style="left:1100px;top:250px;background:#d8d8d8"></div>
<div class="m" style="left:1030px;top:260px;background:#dedede"></div>
<div class="m" style="left:1050px;top:260px;background:#e1e1e1"></div>
<div class="m" style="left:1060px;top:260px;background:#eeeeee"></div>
<div class="m" style="left:1070px;top:260px;background:#ebebeb"></div>
<div class="m" style="left:1080px;top:260px;background:#ebebeb"></div>
<div class="m" style="left:1090px;top:260px;background:#eeeeee"></div>
<div class="m" style="left:1100px;top:260px;background:#f5f5f5"></div>
<div class="m" style="left:1030px;top:280px;background:#fcfcfc"></div>
<div class="m" style="left:1050px;top:280px;background:#fcfcfc"></div>
<div class="m" style="left:1070px;top:280px;background:#fcfcfc"></div>
<div class="m" style="left:1080px;top:280px;background:#fcfcfc"></div>
<div class="m" style="left:1090px;top:280px;background:#fcfcfc"></div>
<div class="m" style="left:1030px;top:290px;background:#bababa"></div>
<div class="m" style="left:1040px;top:290px;background:#fcfcfc"></div>
<div class="m" style="left:1050px;top:290px;background:#a8a8a8"></div>
<div class="m" style="left:1060px;top:290px;background:#c5c5c5"></div>
<div class="m" style="left:1070px;top:290px;background:#b3b3b3"></div>
<div class="m" style="left:1080px;top:290px;background:#bdbdbd"></div>
<div class="m" style="left:1090px;top:290px;background:#cacaca"></div>
<div class="m" style="left:1100px;top:290px;background:#cfcfcf"></div>
<div class="m" style="left:1030px;top:300px;background:#f7f7f7"></div>
<div class="m" style="left:1030px;top:310px;background:#ececec"></div>
<div class="m" style="left:1040px;top:310px;background:#c0c0c0"></div>
<div class="m" style="left:1050px;top:310px;background:#e7e7e7"></div>
<div class="m" style="left:1060px;top:310px;background:#d1d1d1"></div>
<div class="m" style="left:1070px;top:310px;background:#cdcdcd"></div>
<div class="m" style="left:1080px;top:310px;background:#bebebe"></div>
<div class="m" style="left:1090px;top:310px;background:#e2e2e2"></div>
<div class="m" style="left:1100px;top:310px;background:#bbbbbb"></div>
<div class="m" style="left:1030px;top:320px;background:#f4f4f4"></div>
<div class="m" style="left:1040px;top:320px;background:#cccccc"></div>
<div class="m" style="left:1050px;top:320px;background:#f2f2f2"></div>
<div class="m" style="left:1060px;top:320px;background:#eaeaea"></div>
<div class="m" style="left:1070px;top:320px;background:#e7e7e7"></div>
<div class="m" style="left:1080px;top:320px;background:#e0e0e0"></div>
<div class="m" style="left:1090px;top:320px;background:#f7f7f7"></div>
<div class="m" style="left:1100px;top:320px;background:#dedede"></div>
<div class="m" style="left:1030px;top:340px;background:#fcfcfc"></div>
<div class="m" style="left:1050px;top:340px;background:#fcfcfc"></div>
<div class="m" style="left:1070px;top:340px;background:#fcfcfc"></div>
<div class="m" style="left:1080px;top:340px;background:#fcfcfc"></div>
<div class="m" style="left:1090px;top:340px;background:#fcfcfc"></div>
<div class="m" style="left:1030px;top:350px;background:#bababa"></div>
<div class="m" style="left:1040px;top:350px;background:#fcfcfc"></div>
<div class="m" style="left:1050px;top:350px;background:#a8a8a8"></div>
<div class="m" style="left:1060px;top:350px;background:#c5c5c5"></div>
<div class="m" style="left:1070px;top:350px;background:#b3b3b3"></div>
<div class="m" style="left:1080px;top:350px;background:#bdbdbd"></div>
<div class="m" style="left:1090px;top:350px;background:#cacaca"></div>
<div class="m" style="left:1100px;top:350px;background:#cfcfcf"></div>
<div class="m" style="left:1030px;top:360px;background:#f7f7f7"></div>
<div class="m" style="left:1030px;top:380px;background:#e0e0e0"></div>
<div class="m" style="left:1050px;top:380px;background:#d5d5d5"></div>
<div class="m" style="left:1060px;top:380px;background:#dedede"></div>
<div class="m" style="left:1070px;top:380px;background:#d7d7d7"></div>
<div class="m" style="left:1080px;top:380px;background:#dbdbdb"></div>
<div class="m" style="left:1090px;top:380px;background:#e2e2e2"></div>
<div class="m" style="left:1100px;top:380px;background:#e4e4e4"></div>
<div class="m" style="left:1030px;top:390px;background:#cfcfcf"></div>
<div class="m" style="left:1040px;top:390px;background:#fdfdfd"></div>
<div class="m" style="left:1050px;top:390px;background:#d0d0d0"></div>
<div class="m" style="left:1060px;top:390px;background:#e6e6e6"></div>
<div class="m" style="left:1070px;top:390px;background:#d8d8d8"></div>
<div class="m" style="left:1080px;top:390px;background:#dfdfdf"></div>
<div class="m" style="left:1090px;top:390px;background:#e5e5e5"></div>
<div class="m" style="left:1100px;top:390px;background:#eaeaea"></div>
<div class="m" style="left:1030px;top:400px;background:#fdfdfd"></div>
<div class="m" style="left:1050px;top:400px;background:#fdfdfd"></div>
<div class="m" style="left:1060px;top:400px;background:#fcfcfc"></div>
<div class="m" style="left:1070px;top:400px;background:#f8f8f8"></div>
<div class="m" style="left:1080px;top:400px;background:#fcfcfc"></div>
<div class="m" style="left:1090px;top:400px;background:#fafafa"></div>
<div class="m" style="left:1100px;top:400px;background:#fbfbfb"></div>
<div class="m" style="left:1030px;top:410px;background:#e1e1e1"></div>
<div class="m" style="left:1040px;top:410px;background:#d1d1d1"></div>
<div class="m" style="left:1050px;top:410px;background:#b6b6b6"></div>
<div class="m" style="left:1060px;top:410px;background:#bababa"></div>
<div class="m" style="left:1070px;top:410px;background:#b0b0b0"></div>
<div class="m" style="left:1080px;top:410px;background:#c5c5c5"></div>
<div class="m" style="left:1090px;top:410px;background:#a8a8a8"></div>
<div class="m" style="left:1100px;top:410px;background:#dbdbdb"></div>
<div class="m" style="left:1030px;top:430px;background:#ececec"></div>
<div class="m" style="left:1040px;top:430px;background:#b6b6b6"></div>
<div class="m" style="left:1050px;top:430px;background:#e0e0e0"></div>
<div class="m" style="left:1060px;top:430px;background:#cfcfcf"></div>
<div class="m" style="left:1070px;top:430px;background:#cecece"></div>
<div class="m" style="left:1080px;top:430px;background:#bebebe"></div>
<div class="m" style="left:1090px;top:430px;background:#e7e7e7"></div>
<div class="m" style="left:1100px;top:430px;background:#d6d6d6"></div>
<div class="m" style="left:1030px;top:440px;background:#f4f4f4"></div>
<div class="m" style="left:1040px;top:440px;background:#e2e2e2"></div>
<div class="m" style="left:1050px;top:440px;background:#efefef"></div>
<div class="m" style="left:1060px;top:440px;background:#e1e1e1"></div>
<div class="m" style="left:1070px;top:440px;background:#d8d8d8"></div>
<div class="m" style="left:1080px;top:440px;background:#e0e0e0"></div>
<div class="m" style="left:1090px;top:440px;background:#f0f0f0"></div>
<div class="m" style="left:1100px;top:440px;background:#f2f2f2"></div>
<div class="m" style="left:1030px;top:450px;background:#f6f6f6"></div>
<div class="m" style="left:1040px;top:450px;background:#eaeaea"></div>
<div class="m" style="left:1050px;top:450px;background:#e7e7e7"></div>
<div class="m" style="left:1060px;top:450px;background:#ededed"></div>
<div class="m" style="left:1070px;top:450px;background:#f2f2f2"></div>
<div class="m" style="left:1080px;top:450px;background:#f3f3f3"></div>
<div class="m" style="left:1090px;top:450px;background:#eaeaea"></div>
<div class="m" style="left:1030px;top:460px;background:#f3f3f3"></div>
<div class="m" style="left:1040px;top:460px;background:#c9c9c9"></div>
<div class="m" style="left:1050px;top:460px;background:#bcbcbc"></div>
<div class="m" style="left:1060px;top:460px;background:#b7b7b7"></div>
<div class="m" style="left:1070px;top:460px;background:#c0c0c0"></div>
<div class="m" style="left:1080px;top:460px;background:#d2d2d2"></div>
<div class="m" style="left:1090px;top:460px;background:#d5d5d5"></div>
<div class="m" style="left:1100px;top:460px;background:#fafafa"></div>
<div class="m" style="left:1030px;top:480px;background:#e9e9e9"></div>
<div class="m" style="left:1040px;top:480px;background:#acacac"></div>
<div class="m" style="left:1050px;top:480px;background:#c5c5c5"></div>
<div class="m" style="left:1060px;top:480px;background:#bdbdbd"></div>
<div class="m" style="left:1070px;top:480px;background:#c0c0c0"></div>
<div class="m" style="left:1080px;top:480px;background:#cacaca"></div>
<div class="m" style="left:1090px;top:480px;background:#c5c5c5"></div>
<div class="m" style="left:1100px;top:480px;background:#fdfdfd"></div>
<div class="m" style="left:1030px;top:490px;background:#cfcfcf"></div>
<div class="m" style="left:1040px;top:490px;background:#9d9d9d"></div>
<div class="m" style="left:1050px;top:490px;background:#b0b0b0"></div>
<div class="m" style="left:1060px;top:490px;background:#b9b9b9"></div>
<div class="m" style="left:1070px;top:490px;background:#bebebe"></div>
<div class="m" style="left:1080px;top:490px;background:#d5d5d5"></div>
<div class="m" style="left:1090px;top:490px;background:#fafafa"></div>
<div class="m" style="left:1100px;top:490px;background:#fcfcfc"></div>
<div class="m" style="left:1030px;top:500px;background:#ebebeb"></div>
<div class="m" style="left:1040px;top:500px;background:#e5e5e5"></div>
<div class="m" style="left:1050px;top:500px;background:#f1f1f1"></div>
<div class="m" style="left:1060px;top:500px;background:#f6f6f6"></div>
<div class="m" style="left:1070px;top:500px;background:#e1e1e1"></div>
<div class="m" style="left:1080px;top:500px;background:#e2e2e2"></div>
<div class="m" style="left:1090px;top:500px;background:#fdfdfd"></div>
<div style="left:748px;top:267px;width:181px;height:20px;background:linear-gradient(#fff,#e9ebf3);border:1px solid #767676;border-radius:3px;box-shadow:1px 1px 2px rgba(0,0,0,.35)"></div>
<div class="lbl" style="left:754px;top:271px;color:#4c4c4c;word-spacing:1px;-webkit-text-stroke:0">경상북도 칠곡군 가산면 천평리</div>
</div></body></html>
